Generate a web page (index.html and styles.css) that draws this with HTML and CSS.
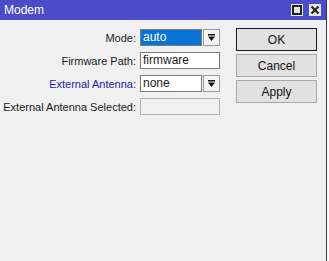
FILE: index.html
```html
<!doctype html>
<html lang="en">

<head>
  <meta charset="utf-8" />
  <title>Modem</title>
  <link rel="stylesheet" href="styles.css">
</head>

<body>
  <div class="window">
    <div class="titlebar">
      <span class="title">Modem</span>
      <div class="tools">
        <span class="tool">
          <svg width="10" height="10" viewBox="0 0 10 10"><rect x="1" y="1" width="8" height="8" fill="none" stroke="#222" stroke-width="2"/></svg>
        </span>
        <span class="tool">
          <svg width="10" height="10" viewBox="0 0 10 10"><path d="M1.5 1.5 L8.5 8.5 M8.5 1.5 L1.5 8.5" stroke="#222" stroke-width="2.2"/></svg>
        </span>
      </div>
    </div>

    <div class="content">
      <div class="form">
        <label>Mode:</label>
        <div class="combo">
          <div class="field selected">auto</div>
          <button class="drop"><svg width="9" height="9" viewBox="0 0 9 9"><rect x="1" y="1" width="7" height="1.5" fill="#111"/><path d="M1 3.5 H8 L4.5 8 Z" fill="#111"/></svg></button>
        </div>

        <label>Firmware Path:</label>
        <div class="field">firmware</div>

        <label class="link">External Antenna:</label>
        <div class="combo">
          <div class="field">none</div>
          <button class="drop"><svg width="9" height="9" viewBox="0 0 9 9"><rect x="1" y="1" width="7" height="1.5" fill="#111"/><path d="M1 3.5 H8 L4.5 8 Z" fill="#111"/></svg></button>
        </div>

        <label>External Antenna Selected:</label>
        <div class="field disabled"></div>
      </div>

      <div class="actions">
        <button class="btn default">OK</button>
        <button class="btn">Cancel</button>
        <button class="btn">Apply</button>
      </div>
    </div>
  </div>
</body>

</html>
```

FILE: styles.css
```css
html,
body {
  height: 100%;
  margin: 0;
}

body {
  background: #fbfbfb;
  font-family: "Liberation Sans", Arial, sans-serif;
  font-size: 11px;
  color: #1a1a1a;
}

.window {
  width: 326px;
  height: 100%;
  background: #f0f0f0;
  border-right: 1px solid #3a3a3a;
}

.titlebar {
  height: 20px;
  background: #4c4cc9;
  display: flex;
  align-items: center;
  justify-content: space-between;
  padding: 0 4px 0 4px;
}

.title {
  color: #fff;
  font-size: 12px;
}

.tools {
  display: flex;
  gap: 6px;
  margin-right: 1px;
}

.tool {
  width: 12px;
  height: 12px;
  background: #e6e6e6;
  display: flex;
  align-items: center;
  justify-content: center;
}

.content {
  display: flex;
  padding: 8px 0 0 0;
}

.form {
  display: grid;
  grid-template-columns: 136px 80px;
  column-gap: 4px;
  row-gap: 6px;
  align-items: center;
  padding-top: 1px;
}

.form label {
  text-align: right;
  white-space: nowrap;
}

.form label.link {
  color: #2424a4;
}

.field {
  height: 17px;
  box-sizing: border-box;
  background: #fff;
  border: 1px solid #7a7a7a;
  padding: 1px 2px;
  line-height: 13px;
  font-size: 12px;
}

.field.selected {
  background: #0a73d6;
  color: #fff;
}

.field.disabled {
  background: #f0f0f0;
  border-color: #b4b4b4;
}

.combo {
  display: flex;
  gap: 1px;
}

.combo .field {
  flex: 1;
}

.drop {
  width: 17px;
  height: 17px;
  padding: 0;
  border: 1px solid #9a9a9a;
  background: #f4f4f4;
  display: flex;
  align-items: center;
  justify-content: center;
}

.actions {
  display: flex;
  flex-direction: column;
  gap: 3px;
  margin-left: 16px;
}

.btn {
  width: 81px;
  height: 23px;
  font-family: inherit;
  font-size: 12px;
  color: #111;
  background: #e1e1e1;
  border: 1px solid #a8a8a8;
  padding: 0;
}

.btn.default {
  border: 1px solid #1a1a1a;
  box-shadow: inset 0 0 0 1px #e1e1e1;
}
```
